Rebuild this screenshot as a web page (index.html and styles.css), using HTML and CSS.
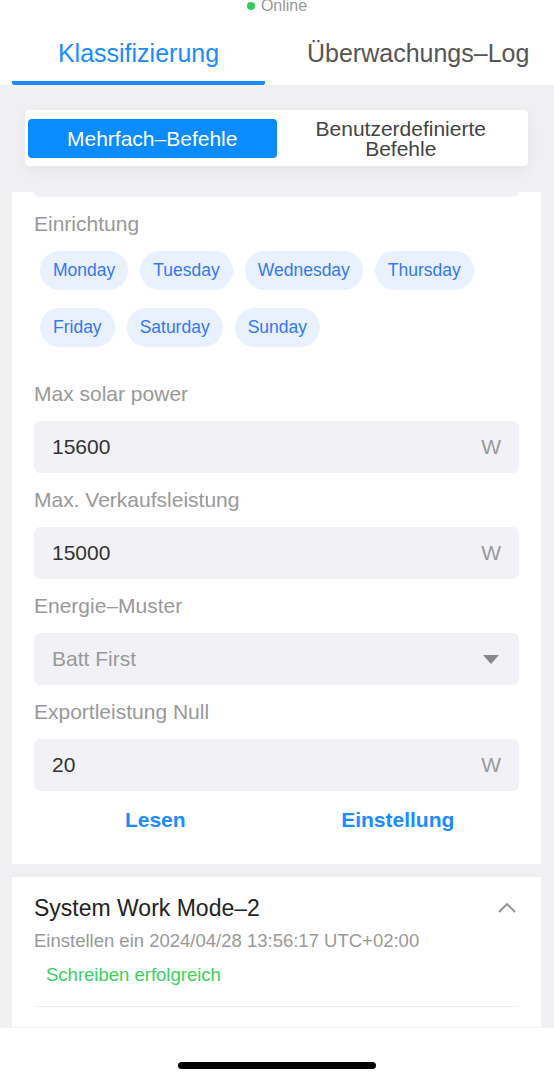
FILE: index.html
```html
<!DOCTYPE html>
<html>
<head>
	<meta charset="UTF-8">
	<title>Klassifizierung</title>
	<link rel="stylesheet" href="styles.css">
</head>
<body>
	<div id="kopf">
		<div id="status"><span class="punkt"></span>Online</div>

		<div id="reiter">
			<div class="reiter-item aktiv">Klassifizierung</div>
			<div class="reiter-item">Überwachungs–Log</div>
		</div>
	</div>

	<div id="inhalt">
		<div id="umschalter">
			<div class="umschalter-item aktiv">Mehrfach–Befehle</div>
			<div class="umschalter-item">Benutzerdefinierte Befehle</div>
		</div>

		<div class="karte einstellungen">
			<div class="rest"></div>

			<div class="feld-titel">Einrichtung</div>
			<div class="tage">
				<span class="tag">Monday</span>
				<span class="tag">Tuesday</span>
				<span class="tag">Wednesday</span>
				<span class="tag">Thursday</span>
				<span class="tag">Friday</span>
				<span class="tag">Saturday</span>
				<span class="tag">Sunday</span>
			</div>

			<div class="feld-titel">Max solar power</div>
			<div class="eingabe"><span class="wert">15600</span><span class="einheit">W</span></div>

			<div class="feld-titel">Max. Verkaufsleistung</div>
			<div class="eingabe"><span class="wert">15000</span><span class="einheit">W</span></div>

			<div class="feld-titel">Energie–Muster</div>
			<div class="eingabe auswahl"><span class="wert">Batt First</span><span class="pfeil"></span></div>

			<div class="feld-titel">Exportleistung Null</div>
			<div class="eingabe"><span class="wert">20</span><span class="einheit">W</span></div>

			<div class="aktionen">
				<a class="knopf">Lesen</a>
				<a class="knopf">Einstellung</a>
			</div>
		</div>

		<div class="karte protokoll">
			<div class="protokoll-kopf">
				<span class="protokoll-titel">System Work Mode–2</span>
				<svg class="chevron" width="20" height="12" viewBox="0 0 20 12">
					<path d="M2 10 L10 2 L18 10" fill="none" stroke="#8e8e93" stroke-width="1.8"/>
				</svg>
			</div>
			<div class="protokoll-zeit">Einstellen ein 2024/04/28 13:56:17 UTC+02:00</div>
			<div class="protokoll-ok">Schreiben erfolgreich</div>
			<div class="trenner"></div>
		</div>
	</div>

	<div id="fuss">
		<div class="home"></div>
	</div>
</body>
</html>
```

FILE: styles.css
```css
* {
	box-sizing: border-box;
}

body {
	margin: 0;
	background-color: #f0f0f2;
	font-family: "Liberation Sans", Arial, sans-serif;
	color: #333;
	height: 1079px;
	overflow: hidden;
	display: flex;
	flex-direction: column;
}

#kopf {
	background-color: #fff;
}

#status {
	height: 13px;
	line-height: 11px;
	font-size: 16px;
	color: #999;
	text-align: center;
	overflow: hidden;
}

#status .punkt {
	display: inline-block;
	width: 8px;
	height: 8px;
	border-radius: 50%;
	background-color: #34c759;
	margin-right: 6px;
	vertical-align: 1px;
}

#reiter {
	display: flex;
	padding: 0 12px;
	height: 72px;
}

.reiter-item {
	font-size: 25px;
	color: #555;
	padding-top: 22px;
	line-height: 36px;
	text-align: center;
}

.reiter-item.aktiv {
	width: 253px;
	color: #1a8cff;
	border-bottom: 4px solid #1a8cff;
	border-radius: 0 0 2px 2px;
}

.reiter-item + .reiter-item {
	margin-left: 42px;
}

#inhalt {
	flex-grow: 1;
	overflow: hidden;
	padding-top: 25px;
	display: flex;
	flex-direction: column;
}

#umschalter {
	display: flex;
	margin: 0 26px 0 25px;
	padding: 9px 3px 8px;
	background-color: #fff;
	border-radius: 4px;
	box-shadow: 0 4px 14px rgba(0, 0, 0, .05);
}

.umschalter-item {
	flex: 1;
	height: 39px;
	display: flex;
	align-items: center;
	justify-content: center;
	text-align: center;
	font-size: 21px;
	line-height: 20px;
	color: #444;
	border-radius: 4px;
	padding: 0 20px;
}

.umschalter-item.aktiv {
	background-color: #0a8cff;
	color: #fff;
}

.karte {
	background-color: #fff;
	margin: 0 13px 0 12px;
	padding: 0 22px;
}

.einstellungen {
	margin-top: 26px;
}

.rest {
	height: 5px;
	background-color: #f2f2f6;
	border-radius: 0 0 6px 6px;
}

.feld-titel {
	font-size: 21px;
	line-height: 30px;
	color: #999;
	margin-top: 12px;
}

.tage {
	display: flex;
	flex-wrap: wrap;
	gap: 18px 12px;
	padding: 12px 6px 20px;
}

.tag {
	background-color: #e9f1fe;
	color: #3478f6;
	font-size: 17.5px;
	line-height: 39px;
	padding: 0 13px;
	border-radius: 20px;
}

.eingabe {
	display: flex;
	align-items: center;
	justify-content: space-between;
	height: 52px;
	margin-top: 12px;
	padding: 0 18px;
	background-color: #f2f2f6;
	border-radius: 6px;
	font-size: 21px;
}

.eingabe .einheit {
	color: #999;
}

.auswahl .wert {
	color: #999;
}

.pfeil {
	width: 0;
	height: 0;
	border-left: 8px solid transparent;
	border-right: 8px solid transparent;
	border-top: 9px solid #888;
	margin-right: 2px;
}

.aktionen {
	display: flex;
	padding: 17px 0 32px;
}

.knopf {
	flex: 1;
	text-align: center;
	font-size: 21px;
	line-height: 24px;
	color: #1a8cff;
	font-weight: 700;
}

.protokoll {
	flex-grow: 1;
	margin-top: 13px;
	padding-top: 17px;
}

.protokoll-kopf {
	display: flex;
	justify-content: space-between;
	align-items: center;
	height: 28px;
}

.protokoll-titel {
	font-size: 23px;
	color: #222;
}

.chevron {
	margin-right: 2px;
}

.protokoll-zeit {
	font-size: 18.5px;
	line-height: 24px;
	color: #999;
	margin-top: 7px;
}

.protokoll-ok {
	font-size: 18.5px;
	line-height: 24px;
	color: #3dd15e;
	margin: 10px 0 0 12px;
}

.trenner {
	height: 1px;
	background-color: #f0f0f0;
	margin-top: 19px;
}

#fuss {
	height: 52px;
	background-color: #fff;
	border-top: 1px solid #f3f3f3;
	display: flex;
	justify-content: center;
	padding-top: 34px;
}

.home {
	width: 198px;
	height: 7px;
	border-radius: 4px;
	background-color: #000;
}
```
